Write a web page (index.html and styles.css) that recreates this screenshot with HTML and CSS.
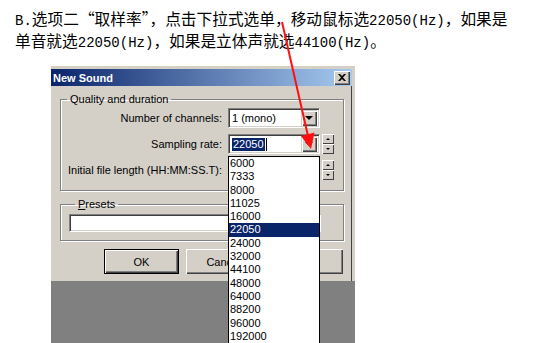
FILE: index.html
```html
<!DOCTYPE html>
<html lang="zh-CN">
<head>
    <meta charset="UTF-8">
    <title>New Sound 取样率</title>
    <link rel="stylesheet" href="styles.css">
</head>
<body>
    <p class="intro"><span class="hw">B.</span>选项二<span class="fw">“</span>取样率<span class="fw">”</span>，点击下拉式选单，移动鼠标选<span class="hw">22050(Hz)</span>，如果是<br>单音就选<span class="hw">22050(Hz)</span>，如果是立体声就选<span class="hw">44100(Hz)</span>。</p>

    <div class="shot">
        <div class="window">
            <div class="titlebar">
                <span class="title">New Sound</span>
                <span class="close">
                    <svg viewBox="0 0 8 7" width="8" height="7"><path d="M0 0h2l2 2 2-2h2L5 3.5 8 7H6L4 5 2 7H0l3-3.5z" fill="#000"/></svg>
                </span>
            </div>

            <div class="body">
                <fieldset class="group quality">
                    <legend>Quality and duration</legend>
                    <div class="row">
                        <span class="label">Number of channels:</span>
                        <div class="combo">
                            <span class="value">1 (mono)</span>
                            <span class="drop"><i class="tri"></i></span>
                        </div>
                    </div>
                    <div class="row">
                        <span class="label">Sampling rate:</span>
                        <div class="combo">
                            <span class="value"><b class="sel">22050</b><i class="caret"></i></span>
                            <span class="drop"><i class="tri"></i></span>
                        </div>
                        <div class="spin"><span><i class="up"></i></span><span><i class="down"></i></span></div>
                    </div>
                    <div class="row">
                        <span class="label">Initial file length (HH:MM:SS.T):</span>
                        <div class="field"></div>
                        <div class="spin"><span><i class="up"></i></span><span><i class="down"></i></span></div>
                    </div>
                </fieldset>

                <fieldset class="group presets">
                    <legend><u>P</u>resets</legend>
                    <div class="preset-box"></div>
                </fieldset>

                <div class="buttons">
                    <button class="btn default">OK</button>
                    <button class="btn">Cancel</button>
                    <button class="btn">Help</button>
                </div>
            </div>
        </div>
        <div class="backdrop"></div>

        <!-- open list of the sampling rate combo -->
        <ul class="droplist">
            <li>6000</li>
            <li>7333</li>
            <li>8000</li>
            <li>11025</li>
            <li>16000</li>
            <li class="active">22050</li>
            <li>24000</li>
            <li>32000</li>
            <li>44100</li>
            <li>48000</li>
            <li>64000</li>
            <li>88200</li>
            <li>96000</li>
            <li>192000</li>
        </ul>
    </div>

    <svg class="arrow" viewBox="0 0 556 343" width="556" height="343">
        <line x1="282" y1="22" x2="308" y2="136" stroke="#ff1010" stroke-width="2"/>
        <polygon points="311,149 314.5,132.5 300.9,136" fill="#ff1010"/>
    </svg>
</body>
</html>
```

FILE: styles.css
```css
* {
    box-sizing: border-box;
}

body {
    margin: 0;
    width: 556px;
    height: 343px;
    overflow: hidden;
    background: #fff;
    position: relative;
    font-family: "Liberation Sans", Arial, sans-serif;
}

/* Chinese caption */
.intro {
    margin: 0;
    height: 52px;
    padding: 8px 0 0 15px;
    font-family: "Noto Sans CJK SC", sans-serif;
    font-size: 15.7px;
    line-height: 22px;
    color: #000;
}

/* half width latin runs, like a song-ti font */
.intro .hw {
    font-family: "Liberation Mono", monospace;
    font-size: 14px;
    line-height: 14px;
}

.intro .fw {
    font-feature-settings: "fwid";
}

.shot {
    position: relative;
    width: 304px;
    margin: 14px 0 0 51px;
}

/* Dialog window */
.window {
    background: #d4d0c8;
    border-top: 3px solid #d4d0c8;
    border-right: 3px solid #d4d0c8;
    box-shadow: inset 0 1px 0 #fff, inset -1px 0 0 #404040;
    font-size: 11px;
    color: #000;
}

.titlebar {
    height: 17px;
    display: flex;
    align-items: center;
    justify-content: space-between;
    padding: 0 2px 0 2px;
    background: linear-gradient(to right, #0a246a, #a6caf0);
}

.title {
    color: #fff;
    font-weight: bold;
    font-size: 11px;
}

.close {
    width: 16px;
    height: 14px;
    display: flex;
    align-items: center;
    justify-content: center;
    background: #d4d0c8;
    box-shadow: inset 1px 1px 0 #fff, inset -1px -1px 0 #404040, inset -2px -2px 0 #808080;
}

.body {
    padding: 7px 8px 7px 9px;
}

.group {
    margin: 0;
    border: 1px solid #808080;
    box-shadow: 1px 1px 0 #fff, inset 1px 1px 0 #fff;
    width: 284px;
}

.group legend {
    padding: 0 3px;
    margin-left: 6px;
    line-height: 12px;
}

.quality {
    padding: 3px 0 10px 0;
}

.row {
    display: flex;
    align-items: center;
    height: 20px;
    margin-bottom: 6px;
}

.row:last-child {
    margin-bottom: 0;
}

.label {
    width: 161px;
    text-align: right;
    margin-right: 6px;
}

.combo, .field, .preset-box {
    background: #fff;
    border-top: 1px solid #808080;
    border-left: 1px solid #808080;
    border-bottom: 1px solid #fff;
    border-right: 1px solid #fff;
    box-shadow: inset 1px 1px 0 #404040, inset -1px -1px 0 #d4d0c8;
}

.combo {
    width: 92px;
    height: 20px;
    display: flex;
    align-items: center;
    justify-content: space-between;
    padding: 2px;
}

.field {
    width: 92px;
    height: 20px;
}

.value {
    display: flex;
    align-items: center;
    padding-left: 1px;
}

.sel {
    font-weight: normal;
    background: #0a246a;
    color: #fff;
    padding: 0 1px;
    line-height: 13px;
}

.caret {
    display: inline-block;
    width: 1px;
    height: 13px;
    background: #000;
    margin-left: 1px;
}

.drop {
    width: 16px;
    height: 16px;
    display: flex;
    align-items: center;
    justify-content: center;
    background: #d4d0c8;
    box-shadow: inset 1px 1px 0 #d4d0c8, inset 2px 2px 0 #fff, inset -1px -1px 0 #404040, inset -2px -2px 0 #808080;
}

.tri {
    width: 0;
    height: 0;
    border-left: 4px solid transparent;
    border-right: 4px solid transparent;
    border-top: 4px solid #000;
}

.spin {
    margin-left: 2px;
    display: flex;
    flex-direction: column;
}

.spin span {
    width: 12px;
    height: 10px;
    display: flex;
    align-items: center;
    justify-content: center;
    background: #d4d0c8;
    box-shadow: inset 1px 1px 0 #fff, inset -1px -1px 0 #404040;
}

.spin .up {
    border-left: 2px solid transparent;
    border-right: 2px solid transparent;
    border-bottom: 2px solid #000;
}

.spin .down {
    border-left: 2px solid transparent;
    border-right: 2px solid transparent;
    border-top: 2px solid #000;
}

.presets {
    margin-top: 7px;
    padding: 4px 0 8px 8px;
}

.preset-box {
    width: 252px;
    height: 18px;
}

.buttons {
    display: flex;
    gap: 7px;
    margin-top: 8px;
    padding-left: 44px;
}

.btn {
    width: 75px;
    height: 25px;
    padding: 0;
    font: 11px "Liberation Sans", Arial, sans-serif;
    color: #000;
    background: #d4d0c8;
    border: none;
    box-shadow: inset 1px 1px 0 #fff, inset -1px -1px 0 #404040, inset -2px -2px 0 #808080;
}

.btn.default {
    border: 1px solid #000;
}

.backdrop {
    height: 70px;
    background: #808080;
}

/* open dropdown list */
.droplist {
    position: absolute;
    left: 177px;
    top: 90px;
    width: 92px;
    margin: 0;
    padding: 0;
    list-style: none;
    background: #fff;
    border: 1px solid #000;
    font-size: 11px;
    line-height: 13.3px;
}

.droplist li {
    padding-left: 1px;
}

.droplist li.active {
    background: #0a246a;
    color: #fff;
}

.arrow {
    position: absolute;
    left: 0;
    top: 0;
    pointer-events: none;
}
```
